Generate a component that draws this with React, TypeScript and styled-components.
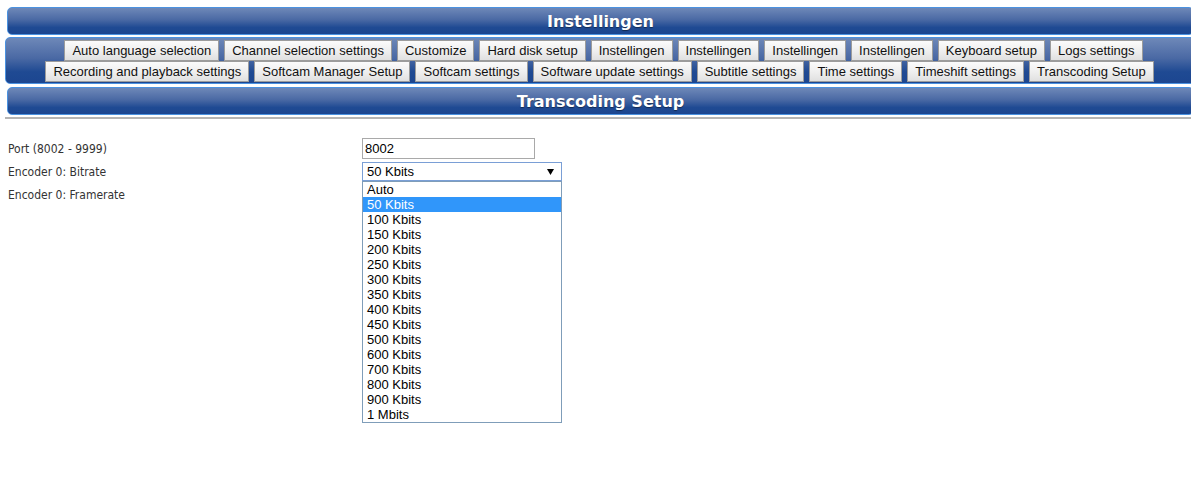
import React, { FC } from "react";
import styled, { createGlobalStyle } from "styled-components";

const GlobalStyle = createGlobalStyle`
  html {
    overflow-x: hidden;
  }
  body {
    margin: 0;
    padding: 0;
    background: #ffffff;
    font-family: "DejaVu Sans", Verdana, sans-serif;
  }
`;

const barGradient = `linear-gradient(to bottom, #6e88b8 0%, #4a69a4 45%, #1f4a93 75%, #1c4690 100%)`;

const Page = styled.div`
  width: 1191px;
  margin-left: 5px;
  padding-top: 7px;
  min-height: 480px;
`;

const TitleBar = styled.div`
  margin: 0 2px;
  height: 26px;
  border: 1px solid #4b92e0;
  border-radius: 5px;
  background: ${barGradient};
  color: #ffffff;
  font-family: "DejaVu Sans", Verdana, sans-serif;
  font-weight: bold;
  font-size: 16px;
  line-height: 27px;
  text-align: center;
  text-shadow: 0 1px 1px rgba(0, 0, 0, 0.45);
`;

const NavBar = styled.div`
  margin-top: 2px;
  margin-bottom: 3px;
  border: 1px solid #4b92e0;
  border-radius: 5px;
  background: ${barGradient};
  padding: 2px 0 1px;
  display: flex;
  flex-direction: column;
  align-items: center;
`;

const NavRow = styled.div<{ $shift?: number }>`
  display: flex;
  gap: 5px;
  justify-content: center;
  margin-left: ${(p) => p.$shift ?? 0}px;
`;

const NavButton = styled.button`
  height: 21px;
  padding: 0 7px;
  border: 1px solid #9c9c9c;
  border-radius: 0;
  background: linear-gradient(to bottom, #fbfbfb 0%, #eeeeee 55%, #e0e0e0 100%);
  font-family: "Liberation Sans", Arial, sans-serif;
  font-size: 13px;
  color: #111111;
  white-space: nowrap;
  cursor: pointer;
`;

const Divider = styled.div`
  margin-top: 2px;
  height: 2px;
  background: #b4b4b4;
`;

const Form = styled.div`
  display: grid;
  grid-template-columns: 354px 1fr;
  grid-auto-rows: 23px;
  align-items: center;
  padding: 18px 0 0 3px;
`;

const Label = styled.div`
  font-family: "DejaVu Sans Condensed", "DejaVu Sans", Verdana, sans-serif;
  font-size: 12px;
  color: #333333;
`;

const TextInput = styled.input`
  box-sizing: border-box;
  width: 173px;
  height: 21px;
  border: 1px solid #a9a9a9;
  padding: 0 2px;
  font-family: "Liberation Sans", Arial, sans-serif;
  font-size: 13px;
  color: #000000;
  outline: none;
`;

const SelectWrap = styled.div`
  position: relative;
  width: 200px;
`;

const SelectBox = styled.div<{ $focused?: boolean }>`
  box-sizing: border-box;
  width: 200px;
  height: 19px;
  border: 1px solid ${(p) => (p.$focused ? "#7a9fd6" : "#a9a9a9")};
  padding: 0 0 0 4px;
  display: flex;
  align-items: center;
  justify-content: space-between;
  font-family: "Liberation Sans", Arial, sans-serif;
  font-size: 13px;
  color: #000000;
  background: #ffffff;
`;

const Arrow = styled.svg`
  margin-right: 7px;
`;

const OptionList = styled.div`
  position: absolute;
  top: 19px;
  left: 0;
  box-sizing: border-box;
  width: 200px;
  border: 1px solid #7f9db9;
  background: #ffffff;
  z-index: 10;
`;

const Option = styled.div<{ $selected?: boolean }>`
  height: 15px;
  line-height: 15px;
  padding-left: 4px;
  font-family: "Liberation Sans", Arial, sans-serif;
  font-size: 13px;
  color: ${(p) => (p.$selected ? "#ffffff" : "#000000")};
  background: ${(p) => (p.$selected ? "#3096fa" : "transparent")};
`;

const rowOne = [
  "Auto language selection",
  "Channel selection settings",
  "Customize",
  "Hard disk setup",
  "Instellingen",
  "Instellingen",
  "Instellingen",
  "Instellingen",
  "Keyboard setup",
  "Logs settings",
];

const rowTwo = [
  "Recording and playback settings",
  "Softcam Manager Setup",
  "Softcam settings",
  "Software update settings",
  "Subtitle settings",
  "Time settings",
  "Timeshift settings",
  "Transcoding Setup",
];

const bitrates = [
  "Auto",
  "50 Kbits",
  "100 Kbits",
  "150 Kbits",
  "200 Kbits",
  "250 Kbits",
  "300 Kbits",
  "350 Kbits",
  "400 Kbits",
  "450 Kbits",
  "500 Kbits",
  "600 Kbits",
  "700 Kbits",
  "800 Kbits",
  "900 Kbits",
  "1 Mbits",
];

const DownArrow: FC = () => (
  <Arrow width="7" height="6" viewBox="0 0 7 6">
    <polygon points="0,0 7,0 3.5,6" fill="#000000" />
  </Arrow>
);

export default function App() {
  return (
    <>
      <GlobalStyle />
      <Page>
        <TitleBar>Instellingen</TitleBar>
        <NavBar>
          <NavRow $shift={6}>
            {rowOne.map((t, i) => (
              <NavButton key={i}>{t}</NavButton>
            ))}
          </NavRow>
          <NavRow $shift={-2}>
            {rowTwo.map((t, i) => (
              <NavButton key={i}>{t}</NavButton>
            ))}
          </NavRow>
        </NavBar>
        <TitleBar>Transcoding Setup</TitleBar>
        <Divider />
        <Form>
          <Label>Port (8002 - 9999)</Label>
          <div>
            <TextInput defaultValue="8002" />
          </div>
          <Label>Encoder 0: Bitrate</Label>
          <SelectWrap>
            <SelectBox $focused>
              <span>50 Kbits</span>
              <DownArrow />
            </SelectBox>
            <OptionList>
              {bitrates.map((b) => (
                <Option key={b} $selected={b === "50 Kbits"}>
                  {b}
                </Option>
              ))}
            </OptionList>
          </SelectWrap>
          <Label>Encoder 0: Framerate</Label>
          <SelectWrap>
            <SelectBox>
              <span>Auto</span>
              <DownArrow />
            </SelectBox>
          </SelectWrap>
        </Form>
      </Page>
    </>
  );
}
